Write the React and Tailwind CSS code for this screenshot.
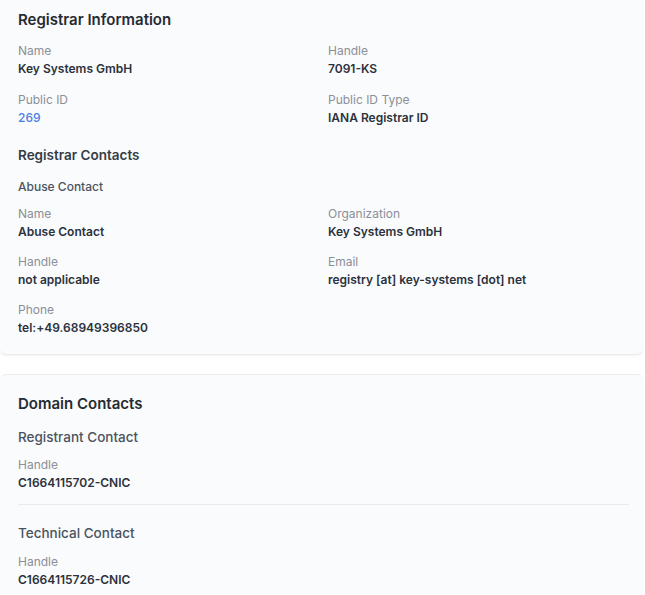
import React from "react";

function Field({ label, value, valueClass = "text-[#2b323d]" }) {
  return (
    <div>
      <div className="text-[12px] leading-[18px] text-[#8a8f98]">{label}</div>
      <div className={`text-[12px] leading-[18px] font-[560] ${valueClass}`}>{value}</div>
    </div>
  );
}

export default function App() {
  return (
    <div
      className="min-h-[595px] w-[645px] bg-white"
      style={{ fontFamily: "Inter, 'Noto Sans', sans-serif" }}
    >
      {/* Registrar */}
      <div className="mr-[2px] rounded-b-md border-b border-[#e9ebef] bg-[#fafbfc] px-[18px] pt-[9px] pb-[17px] shadow-[0_1px_3px_rgba(0,0,0,0.05)]">
        <h2 className="text-[15px] leading-[22px] font-semibold text-[#262b33]">
          Registrar Information
        </h2>
        <div className="mt-[11px] grid grid-cols-[310px_1fr] gap-y-[13px]">
          <Field label="Name" value="Key Systems GmbH" />
          <Field label="Handle" value="7091-KS" />
          <Field label="Public ID" value="269" valueClass="text-[#4a7fe0] font-medium" />
          <Field label="Public ID Type" value="IANA Registrar ID" />
        </div>

        <h3 className="mt-[18px] text-[13.5px] leading-[20px] font-semibold text-[#353b45]">
          Registrar Contacts
        </h3>
        <div className="mt-[13px] text-[12px] leading-[18px] font-medium text-[#4b5360]">
          Abuse Contact
        </div>
        <div className="mt-[9px] grid grid-cols-[310px_1fr] gap-y-[12px]">
          <Field label="Name" value="Abuse Contact" />
          <Field label="Organization" value="Key Systems GmbH" />
          <Field label="Handle" value="not applicable" />
          <Field label="Email" value="registry [at] key-systems [dot] net" />
          <Field label="Phone" value="tel:+49.68949396850" />
        </div>
      </div>

      {/* Domain contacts */}
      <div className="mt-[19px] mr-[2px] rounded-t-md border-t border-[#e9ebef] bg-[#fafbfc] px-[18px] pt-[18px] pb-[8px]">
        <h2 className="text-[15px] leading-[22px] font-semibold text-[#262b33]">
          Domain Contacts
        </h2>
        <div className="mt-[12px] text-[13.5px] leading-[20px] font-medium text-[#4b5360]">
          Registrant Contact
        </div>
        <div className="mt-[9px]">
          <Field label="Handle" value="C1664115702-CNIC" />
        </div>
        <div className="mt-[12px] w-[611px] border-t border-[#e8eaee]" />
        <div className="mt-[18px] text-[13.5px] leading-[20px] font-medium text-[#4b5360]">
          Technical Contact
        </div>
        <div className="mt-[10px]">
          <Field label="Handle" value="C1664115726-CNIC" />
        </div>
      </div>
    </div>
  );
}
